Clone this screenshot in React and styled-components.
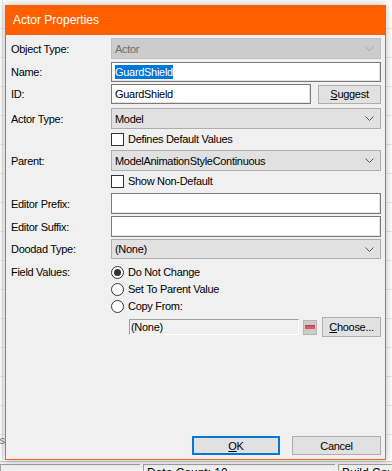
import React from "react";
import styled, { createGlobalStyle } from "styled-components";

const GlobalStyle = createGlobalStyle`
  html, body {
    margin: 0;
    padding: 0;
    background: #ffffff;
  }
  body {
    font-family: "Liberation Sans", Arial, sans-serif;
    font-size: 11px;
    color: #000;
  }
`;

const Chevron = ({ disabled }) => (
  <svg width="9" height="5" viewBox="0 0 9 5">
    <polyline
      points="0.5,0.5 4.5,4.5 8.5,0.5"
      fill="none"
      stroke={disabled ? "#a8a8a8" : "#555"}
      strokeWidth="1"
    />
  </svg>
);

const Combo = ({ value, disabled }) => (
  <StyledCombo $disabled={disabled}>
    <span>{value}</span>
    <Chevron disabled={disabled} />
  </StyledCombo>
);

const App = () => {
  return (
    <>
      <GlobalStyle />
      <Screen>
        <GhostText>is</GhostText>
        <Dialog>
          <TitleBar>Actor Properties</TitleBar>
          <Body>
            <Row $top={3} $h={21}>
              <Label>Object Type:</Label>
              <Combo value="Actor" disabled />
            </Row>
            <Row $top={3} $h={20}>
              <Label>Name:</Label>
              <TextBox>
                <Selected>GuardShield</Selected>
              </TextBox>
            </Row>
            <Row $top={2} $h={20}>
              <Label>ID:</Label>
              <Inline>
                <TextBox $grow>GuardShield</TextBox>
                <Button $w={63} $h={19}>
                  <u>S</u>uggest
                </Button>
              </Inline>
            </Row>
            <Row $top={4} $h={21}>
              <Label>Actor Type:</Label>
              <Combo value="Model" />
            </Row>
            <Row $top={3} $h={14}>
              <Label />
              <Check>
                <Box />
                Defines Default Values
              </Check>
            </Row>
            <Row $top={4} $h={21}>
              <Label>Parent:</Label>
              <Combo value="ModelAnimationStyleContinuous" />
            </Row>
            <Row $top={3} $h={14}>
              <Label />
              <Check>
                <Box />
                Show Non-Default
              </Check>
            </Row>
            <Row $top={5} $h={21}>
              <Label>Editor Prefix:</Label>
              <TextBox />
            </Row>
            <Row $top={2} $h={21}>
              <Label>Editor Suffix:</Label>
              <TextBox />
            </Row>
            <Row $top={2} $h={20}>
              <Label>Doodad Type:</Label>
              <Combo value="(None)" />
            </Row>
            <Row $top={6} $h={14}>
              <Label>Field Values:</Label>
              <Check>
                <Radio $on />
                Do Not Change
              </Check>
            </Row>
            <Row $top={3} $h={14}>
              <Label />
              <Check>
                <Radio />
                Set To Parent Value
              </Check>
            </Row>
            <Row $top={3} $h={14}>
              <Label />
              <Check>
                <Radio />
                Copy From:
              </Check>
            </Row>
            <Row $top={4} $h={20}>
              <Label />
              <CopyLine>
                <ReadOnly>(None)</ReadOnly>
                <ClearButton>
                  <span />
                </ClearButton>
                <Button $w={59} $h={20}>
                  <u>C</u>hoose...
                </Button>
              </CopyLine>
            </Row>
            <Footer>
              <Button $w={88} $h={19} $default>
                <u>O</u>K
              </Button>
              <Button $w={89} $h={19}>
                Cancel
              </Button>
            </Footer>
          </Body>
        </Dialog>
        <StatusBar>
          <Panel $w={140} />
          <Panel $w={192}>Data Count: 10</Panel>
          <Panel $grow>Build Count</Panel>
        </StatusBar>
      </Screen>
    </>
  );
};

const Screen = styled.div`
  position: relative;
  width: 392px;
  height: 471px;
  overflow: hidden;
  padding: 5px 0 0 5px;
  box-sizing: border-box;
  display: flex;
  flex-direction: column;
  background-color: #ffffff;
  background-image: linear-gradient(to right, #e4e4e4 1px, transparent 1px),
    repeating-linear-gradient(
      to bottom,
      transparent 0px,
      transparent 28px,
      #e8e8e8 28px,
      #e8e8e8 29px
    );
  background-size: 3px 100%, 100% 100%;
  background-repeat: no-repeat, repeat;
  background-position: 2px 0, 0 0;
`;

const GhostText = styled.span`
  position: absolute;
  left: -3px;
  top: 434px;
  color: #7a7a7a;
  font-size: 11px;
`;

const Dialog = styled.div`
  position: relative;
  width: 381px;
  height: 457px;
  box-sizing: border-box;
  border: 1px solid #ff5f0a;
  background: #f0f0f0;
  display: flex;
  flex-direction: column;
  box-shadow: 0 0 8px rgba(0, 0, 0, 0.28);
`;

const TitleBar = styled.div`
  height: 30px;
  flex-shrink: 0;
  background: #ff5f00;
  color: #ffffff;
  font-size: 12px;
  display: flex;
  align-items: center;
  padding: 0 0 0 8px;
  margin: -1px -1px 0;
`;

const Body = styled.div`
  flex: 1;
  display: flex;
  flex-direction: column;
  padding: 0 4px 4px 5px;
`;

const Row = styled.div`
  display: flex;
  align-items: center;
  margin-top: ${(p) => p.$top}px;
  height: ${(p) => p.$h}px;
`;

const Label = styled.div`
  width: 100px;
  flex-shrink: 0;
  letter-spacing: -0.3px;
`;

const StyledCombo = styled.div`
  flex: 1;
  height: 100%;
  box-sizing: border-box;
  border: 1px solid ${(p) => (p.$disabled ? "#bfbfbf" : "#adadad")};
  background: ${(p) => (p.$disabled ? "#cccccc" : "#e1e1e1")};
  color: ${(p) => (p.$disabled ? "#6d6d6d" : "#000")};
  display: flex;
  align-items: center;
  justify-content: space-between;
  padding: 0 6px 0 3px;
  letter-spacing: -0.3px;
`;

const TextBox = styled.div`
  flex: ${(p) => (p.$grow ? 1 : 1)};
  height: 100%;
  box-sizing: border-box;
  background: #ffffff;
  border: 1px solid #7a7a7a;
  box-shadow: inset -1px -1px 0 #e3e3e3;
  display: flex;
  align-items: center;
  padding-left: 3px;
  letter-spacing: -0.3px;
`;

const Selected = styled.span`
  background: #0078d7;
  color: #ffffff;
  line-height: 14px;
`;

const Inline = styled.div`
  flex: 1;
  height: 100%;
  display: flex;
  align-items: center;
  gap: 7px;
`;

const Button = styled.div`
  width: ${(p) => p.$w}px;
  height: ${(p) => p.$h}px;
  flex-shrink: 0;
  box-sizing: border-box;
  background: #e1e1e1;
  border: ${(p) => (p.$default ? "2px solid #0078d7" : "1px solid #adadad")};
  display: flex;
  align-items: center;
  justify-content: center;
  letter-spacing: -0.3px;
  u {
    text-decoration: underline;
  }
`;

const Check = styled.div`
  display: flex;
  align-items: center;
  gap: 4px;
  letter-spacing: -0.3px;
`;

const Box = styled.span`
  width: 13px;
  height: 13px;
  box-sizing: border-box;
  border: 1px solid #333333;
  background: #ffffff;
`;

const Radio = styled.span`
  width: 13px;
  height: 13px;
  box-sizing: border-box;
  border: 1px solid #333333;
  border-radius: 50%;
  background: #ffffff;
  display: flex;
  align-items: center;
  justify-content: center;
  &::after {
    content: "";
    display: ${(p) => (p.$on ? "block" : "none")};
    width: 7px;
    height: 7px;
    border-radius: 50%;
    background: #333333;
  }
`;

const CopyLine = styled.div`
  flex: 1;
  height: 100%;
  display: flex;
  align-items: center;
  padding-left: 18px;
  gap: 4px;
`;

const ReadOnly = styled.div`
  flex: 1;
  height: 16px;
  box-sizing: border-box;
  border-top: 1px solid #a0a0a0;
  border-left: 1px solid #a0a0a0;
  border-bottom: 1px solid #ffffff;
  border-right: 1px solid #ffffff;
  display: flex;
  align-items: center;
  padding-left: 1px;
  letter-spacing: -0.3px;
`;

const ClearButton = styled.div`
  width: 14px;
  height: 15px;
  box-sizing: border-box;
  background: #cccccc;
  border: 1px solid #b5b5b5;
  display: flex;
  align-items: center;
  justify-content: center;
  margin-right: 1px;
  span {
    width: 10px;
    height: 4px;
    background: #e0585d;
    border-top: 1px solid #c53b40;
    box-sizing: border-box;
  }
`;

const Footer = styled.div`
  margin-top: auto;
  display: flex;
  justify-content: flex-end;
  gap: 12px;
`;

const StatusBar = styled.div`
  margin: 1px 0 0 -5px;
  height: 9px;
  flex-shrink: 0;
  background: #f0f0f0;
  border-top: 1px solid #c8c8c8;
  display: flex;
  align-items: flex-start;
  gap: 3px;
`;

const Panel = styled.div`
  ${(p) => (p.$grow ? "flex: 1;" : `width: ${p.$w}px;`)}
  height: 14px;
  margin-top: 2px;
  box-sizing: border-box;
  border-top: 1px solid #a0a0a0;
  border-left: 1px solid #a0a0a0;
  padding: 1px 0 0 3px;
  font-size: 12px;
  line-height: 14px;
  white-space: nowrap;
  overflow: hidden;
`;

export default App;
